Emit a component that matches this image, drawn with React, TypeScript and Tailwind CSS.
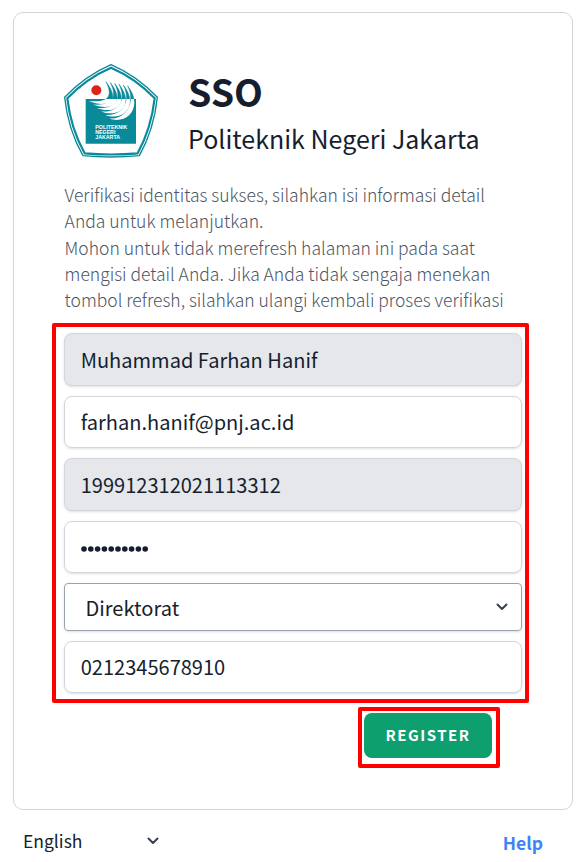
import type { ReactNode } from "react";

const BLADES = [0, 1, 2, 3, 4, 5];

function bladePath(i: number) {
  const sx = 116 + i * 12.5;
  const sy = 138 + i * 10.5;
  const ex = 168 + i * 13;
  const ey = 80 + i * 2.5;
  return `M${sx} ${sy} C${sx + 50} ${sy + 20} ${ex + 50} ${ey + 66} ${ex} ${ey} C${ex + 27} ${ey + 54} ${sx + 46} ${sy + 4} ${sx} ${sy}Z`;
}

function Logo() {
  return (
    <svg viewBox="42 27 282 282" className="block h-[94px] w-[94px] shrink-0">
      <defs>
        <clipPath id="above">
          <path d="M100 60H270V132H100Z" />
        </clipPath>
        <clipPath id="inside">
          <path d="M107 132H258V266H107Z" />
        </clipPath>
      </defs>
      <path
        d="M183 29 Q260 62 322 127 Q312 223 268 302 Q183 310 99 302 Q54 223 44 127 Q106 62 183 29Z"
        fill="#fff"
        stroke="#0a8a98"
        strokeWidth="4"
      />
      <path
        d="M183 38 Q257 70 314 130 Q304 219 263 295 Q183 302 104 295 Q62 219 52 130 Q109 70 183 38Z"
        fill="#fff"
        stroke="#0a8a98"
        strokeWidth="6.5"
      />
      <path d="M107 132H258V266H107Z" fill="#0a8a98" />
      <circle cx="139" cy="106" r="15" fill="#dc241f" />
      <g clipPath="url(#above)" fill="#0a8a98" stroke="#0a8a98" strokeWidth="1.5">
        {BLADES.map((i) => (
          <path key={i} d={bladePath(i)} />
        ))}
      </g>
      <g clipPath="url(#inside)" fill="#fff">
        {BLADES.map((i) => (
          <path key={i} d={bladePath(i)} />
        ))}
      </g>
      <g fill="#fff" className="font-['Liberation_Sans'] text-[15px] font-bold">
        <text x="136" y="222" textLength="96" lengthAdjust="spacingAndGlyphs">POLITEKNIK</text>
        <text x="136" y="237" textLength="60" lengthAdjust="spacingAndGlyphs">NEGERI</text>
        <text x="136" y="252" textLength="74" lengthAdjust="spacingAndGlyphs">JAKARTA</text>
      </g>
    </svg>
  );
}

function Chevron() {
  return (
    <svg viewBox="0 0 12 8" className="h-2 w-3" fill="none" stroke="#374151" strokeWidth="2" strokeLinecap="round" strokeLinejoin="round">
      <path d="M1.5 1.5 6 6l4.5-4.5" />
    </svg>
  );
}

function Field({ children, className }: { children: ReactNode; className: string }) {
  return (
    <div className={`flex items-center rounded-lg border border-gray-300 pl-[15.7px] text-[20.05px] leading-none shadow-sm ${className}`}>
      {children}
    </div>
  );
}

export default function App() {
  return (
    <div className="h-[862px] w-[586px] overflow-hidden bg-white font-['Noto_Sans_CJK_SC',sans-serif] text-[#161e2e]">
      <main className="ml-[13px] mt-3 flex h-[798px] w-[560px] flex-col rounded-[10px] border border-gray-300">
        <header className="ml-[50px] mt-[51px] flex h-[100px]">
          <Logo />
          <div className="ml-[30px] mt-1 whitespace-nowrap">
            <h1 className="text-[37.5px] font-bold leading-[46px]">SSO</h1>
            <p className="pt-px text-[25px] leading-[46px]">Politeknik Negeri Jakarta</p>
          </div>
        </header>
        <p className="ml-[50.6px] mt-[18px] whitespace-nowrap text-[17.5px] font-light leading-[26.25px] text-[#4b5563]">
          Verifikasi identitas sukses, silahkan isi informasi detail
          <br />
          Anda untuk melanjutkan.
          <br />
          Mohon untuk tidak merefresh halaman ini pada saat
          <br />
          mengisi detail Anda. Jika Anda tidak sengaja menekan
          <br />
          tombol refresh, silahkan ulangi kembali proses verifikasi
        </p>
        <section className="ml-[38px] mt-[10px] flex h-[380px] w-[477px] shrink-0 flex-col gap-[10px] rounded-[2px] border-4 border-[#ff0000] pl-2 pr-[3px] pt-[6px]">
          <Field className="h-[53px] bg-gray-200">Muhammad Farhan Hanif</Field>
          <Field className="h-[52px]">farhan.hanif@pnj.ac.id</Field>
          <Field className="h-[53px] bg-gray-200">199912312021113312</Field>
          <Field className="h-[52px]">
            <svg viewBox="0 0 68 6" className="mt-1 h-[6px] w-[68px]" fill="currentColor">
              {Array.from({ length: 10 }, (_, i) => (
                <circle key={i} cx={3 + i * 6.8} cy="3" r="2.8" />
              ))}
            </svg>
          </Field>
          <div className="flex h-12 items-center justify-between rounded border border-gray-400 pl-[20.5px] pr-[13px] text-[20.05px] leading-none shadow-sm">
            <span className="pt-[2px]">Direktorat</span>
            <Chevron />
          </div>
          <Field className="h-[52px]">0212345678910</Field>
        </section>
        <div className="ml-[344px] mt-1 flex h-[61px] w-[142px] shrink-0 rounded-[2px] border-4 border-[#ff0000] pl-[2px] pt-[2px]">
          <button className="h-[45px] w-32 rounded-lg bg-[#0e9f6e] pb-[2px] text-[15px] font-bold leading-none tracking-[1.5px] text-white">
            REGISTER
          </button>
        </div>
      </main>
      <footer className="flex items-start justify-between pl-[23px] pr-[43px] pt-4 text-[17.5px] leading-[30px]">
        <div className="flex w-[136px] items-center justify-between">
          English
          <Chevron />
        </div>
        <a className="pt-[2px] font-bold text-[#3f83f8]">Help</a>
      </footer>
    </div>
  );
}
